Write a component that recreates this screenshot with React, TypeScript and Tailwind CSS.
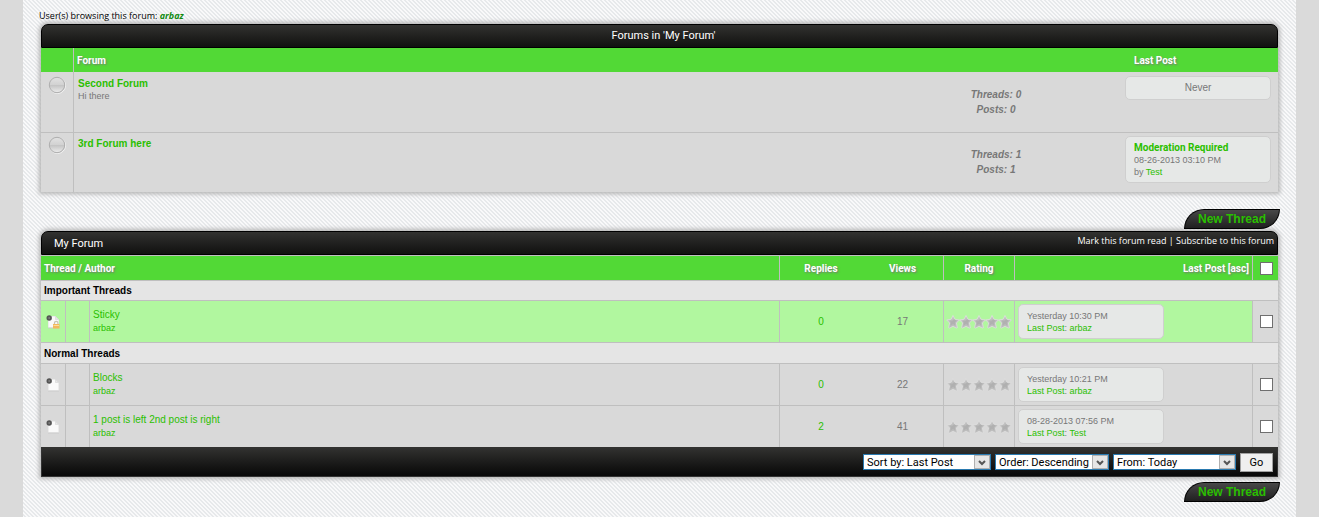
import type { ReactNode } from 'react'

const forums = [
  { name: 'Second Forum', description: 'Hi there', threads: 0, posts: 0, last: null },
  {
    name: '3rd Forum here',
    description: '',
    threads: 1,
    posts: 1,
    last: { title: 'Moderation Required', date: '08-26-2013 03:10 PM', user: 'Test' },
  },
]

const important = [
  { title: 'Sticky', author: 'arbaz', replies: 0, views: 17, date: 'Yesterday 10:30 PM', last: 'arbaz', locked: true },
]

const normal = [
  { title: 'Blocks', author: 'arbaz', replies: 0, views: 22, date: 'Yesterday 10:21 PM', last: 'arbaz', locked: false },
  { title: '1 post is left 2nd post is right', author: 'arbaz', replies: 2, views: 41, date: '08-28-2013 07:56 PM', last: 'Test', locked: false },
]

type Thread = (typeof normal)[number]

function Link({ children, className = '' }: { children: ReactNode; className?: string }) {
  return (
    <a href="#" className={`text-[#2abf00] ${className}`}>
      {children}
    </a>
  )
}

function NewThread() {
  return (
    <a
      href="#"
      className="flex h-5 w-24 items-center justify-center rounded-tl-[20px] rounded-br-[20px] border border-black bg-linear-to-b from-[#484848] to-[#202020] text-xs font-bold text-[#2abf00]"
    >
      New Thread
    </a>
  )
}

function Orb() {
  return (
    <svg width="18" height="18" viewBox="0 0 18 18" className="mx-auto">
      <defs>
        <linearGradient id="orb" x1="0" y1="0" x2="0" y2="1">
          <stop offset="0" stopColor="#e2e2e2" />
          <stop offset="0.48" stopColor="#d2d2d2" />
          <stop offset="0.52" stopColor="#c4c4c4" />
          <stop offset="1" stopColor="#ededed" />
        </linearGradient>
      </defs>
      <circle cx="9.5" cy="9.5" r="8" fill="none" stroke="#f2f2f2" />
      <circle cx="9" cy="9" r="7.700" fill="url(#orb)" stroke="#adadad" />
    </svg>
  )
}

function PageIcon({ locked }: { locked: boolean }) {
  return (
    <svg width="14" height="16" viewBox="0 0 14 16" className="mx-auto">
      <path d="M2.500 2.500h7l3 3v8h-10z" fill="#fafafa" stroke="#ececec" />
      <path d="M9.500 2.500v3h3z" fill="#e8e8e8" stroke="#cfcfcf" strokeWidth="0.500" />
      <path d="M2 14h11" stroke="#c8c8c8" strokeWidth="0.800" />
      <circle cx="3.200" cy="4" r="2.700" fill="#555" />
      <circle cx="3.200" cy="4" r="1" fill="#7d7d7d" />
      {locked && (
        <>
          <path d="M8.500 10v-1a1.700 1.700 0 0 1 3.400 0v1" fill="none" stroke="#c9c2b2" strokeWidth="1.200" />
          <rect x="7" y="10" width="6.500" height="4.500" fill="#f3b95c" />
          <path d="M7.500 11.500h5.500" stroke="#fbdc9f" />
        </>
      )}
    </svg>
  )
}

function Stars() {
  return (
    <svg width="66" height="15" viewBox="0 0 66 15" className="mx-auto" role="img" aria-label="Not rated">
      <defs>
        <linearGradient id="star" x1="0" y1="0" x2="1" y2="1">
          <stop offset="0" stopColor="#d6d6d6" />
          <stop offset="0.500" stopColor="#bababa" />
          <stop offset="1" stopColor="#c8c8c8" />
        </linearGradient>
      </defs>
      {[0, 13, 26, 39, 52].map((x) => (
        <g key={x} transform={`translate(${x} 1)`}>
          <path
            d="M7 .5l2 3.800 4.400.6-3 3.100 1 4.700-1.200.3-3.200-1.700-3.200 1.700-1.200-.3 1-4.700-3-3.100 4.400-.6z"
            fill="url(#star)"
            stroke="#dedede"
            strokeWidth="0.800"
          />
          <path d="M3.500 5.500h3.500l1-1 2.500 1-1.500 2 .5 3.500-2.500-2-2.500 1.500 .5-2.500z" fill="#a8a8a8" fillOpacity="0.550" />
        </g>
      ))}
    </svg>
  )
}

function PostBox({ children, className = '' }: { children: ReactNode; className?: string }) {
  return (
    <div className={`w-[146px] rounded-[5px] border border-[#cfcfcf] bg-[#e6e8e7] px-2 leading-3 ${className}`}>{children}</div>
  )
}

function Check({ label }: { label: string }) {
  return (
    <input
      type="checkbox"
      aria-label={label}
      className="ml-[7px] block size-[13px] appearance-none border border-[#6f6f6f] bg-white"
    />
  )
}

function ThreadRow({ thread, sticky = false }: { thread: Thread; sticky?: boolean }) {
  const bg = sticky ? 'bg-[#b1f79f]' : 'bg-[#d9d9d9]'
  const cell = `border-t border-r border-[#bfbfbf] ${bg}`
  return (
    <tr className="h-[42px]">
      <td className={cell}>
        <PageIcon locked={thread.locked} />
      </td>
      <td className={cell}></td>
      <td className={`pl-[3px] leading-[13px] ${cell}`}>
        <Link>{thread.title}</Link>
        <br />
        <Link className="text-[9px]">{thread.author}</Link>
      </td>
      <td className={`border-t border-[#bfbfbf] text-center ${bg}`}>
        <Link>{thread.replies}</Link>
      </td>
      <td className={`text-center ${cell}`}>{thread.views}</td>
      <td className={cell}>
        <Stars />
      </td>
      <td className={`pl-[3px] text-[9px] ${cell}`}>
        <PostBox className="pt-[5px] pb-1">
          {thread.date}
          <br />
          <Link>Last Post</Link>: <Link>{thread.last}</Link>
        </PostBox>
      </td>
      <td className="border-t border-[#bfbfbf] bg-[#d9d9d9]">
        <Check label={`Select ${thread.title}`} />
      </td>
    </tr>
  )
}

function Separator({ children, className }: { children: ReactNode; className: string }) {
  return (
    <tr className={className}>
      <td colSpan={8} className="border-t border-[#bfbfbf] bg-[#e5e5e5] pl-[3px] font-bold text-black">
        {children}
      </td>
    </tr>
  )
}

function Select({ label, className }: { label: string; className: string }) {
  return (
    <div className={`relative h-4 ${className}`}>
      <select
        aria-label={label}
        className="block h-4 w-full appearance-none border border-[#2a7ab0] bg-white pt-px pl-[3px] font-[Roboto,sans-serif] text-[11px] leading-[14px] text-black"
      >
        <option>{label}</option>
      </select>
      <span className="pointer-events-none absolute inset-y-px right-px flex w-4 items-center justify-center border border-[#b0b0b0] bg-[#e6e6e6]">
        <svg width="8" height="8" viewBox="0 0 8 8" fill="none" stroke="#555" strokeWidth="2">
          <path d="M1 3l3 3 3-3" />
        </svg>
      </span>
    </div>
  )
}

const panel = 'mx-[2px] rounded-t-[7px] bg-[#bfbfbf] shadow-[0_0_4px_2px_#b4b4b4]'
const bar = 'rounded-t-[7px] border border-black bg-linear-to-b from-[#323230] to-[#111110] text-white'
const head = 'bg-[#52d936] font-[Roboto,sans-serif] font-bold text-white [text-shadow:1px_1px_2px_#777]'

export default function App() {
  return (
    <div className="min-h-screen bg-[#dadada] px-[23px] font-['Liberation_Sans',Arial,sans-serif] text-[10px] text-[#777]">
      <main className="min-h-screen bg-[linear-gradient(45deg,#e7e9eb_25%,#f9f9fa_25%,#f9f9fa_50%,#e7e9eb_50%,#e7e9eb_75%,#f9f9fa_75%)] bg-size-[4px_4px] px-4 pt-[9px]">
        <p className="h-[15px] font-['Open_Sans',sans-serif] text-[9px] leading-[14px] text-black">
          User(s) browsing this forum:{' '}
          <a href="#" className="font-bold text-[#118a11] italic">
            arbaz
          </a>
        </p>

        <section className={panel}>
          <h2 className={`flex h-6 items-center justify-center pl-2 font-[Roboto,sans-serif] text-[11px] ${bar}`}>Forums in 'My Forum'</h2>
          <table className="w-full table-fixed border-separate border-spacing-0">
            <colgroup>
              <col className="w-[33px]" />
              <col />
              <col className="w-[248px]" />
              <col className="w-[158px]" />
            </colgroup>
            <thead>
              <tr className={`h-6 text-left ${head}`}>
                <th className="border-r border-[#bfbfbf]"></th>
                <th className="pl-[3px]">Forum</th>
                <th></th>
                <th className="pl-[14px]">Last Post</th>
              </tr>
            </thead>
            <tbody>
              {forums.map((forum, i) => (
                <tr key={forum.name} className={i === 0 ? 'h-[60px] bg-[#d9d9d9] *:pt-1' : 'h-[60px] bg-[#d9d9d9] *:border-t *:pt-[3px]'}>
                  <td className="border-r border-[#bfbfbf] align-top">
                    <Orb />
                  </td>
                  <td className="border-[#bfbfbf] pl-1 align-top leading-3">
                    <Link className="mt-[2px] block font-bold">{forum.name}</Link>
                    <div className="text-[9px]">{forum.description}</div>
                  </td>
                  <td className="border-[#bfbfbf] pb-1 text-center leading-[15px] font-bold italic">
                    Threads: {forum.threads}
                    <br />
                    Posts: {forum.posts}
                  </td>
                  <td className="border-[#bfbfbf] pl-[5px] align-top">
                    {forum.last ? (
                      <PostBox className="pt-[5px] pb-1 text-[9px]">
                        <Link className="block font-[Roboto,sans-serif] text-[10px] font-bold">{forum.last.title}</Link>
                        {forum.last.date}
                        <br />
                        by <Link>{forum.last.user}</Link>
                      </PostBox>
                    ) : (
                      <PostBox className="py-[5px] text-center">Never</PostBox>
                    )}
                  </td>
                </tr>
              ))}
            </tbody>
          </table>
        </section>

        <div className="mt-[17px] flex justify-end">
          <NewThread />
        </div>

        <section className={`mt-[2px] ${panel}`}>
          <div className={`flex h-6 justify-between pr-[3px] pl-3 ${bar}`}>
            <h2 className="font-[Roboto,sans-serif] text-[11px] leading-[23px]">My Forum</h2>
            <nav className="font-['Open_Sans',sans-serif] text-[9px] leading-[18px]">
              <a href="#">Mark this forum read</a> | <a href="#">Subscribe to this forum</a>
            </nav>
          </div>
          <table className="w-full table-fixed border-separate border-spacing-0">
            <colgroup>
              <col className="w-[25px]" />
              <col className="w-6" />
              <col />
              <col className="w-[82px]" />
              <col className="w-[82px]" />
              <col className="w-[71px]" />
              <col className="w-[238px]" />
              <col className="w-[25px]" />
            </colgroup>
            <thead>
              <tr className={`h-[25px] *:border-t *:border-[#bfbfbf] ${head}`}>
                <th colSpan={3} className="border-r pl-[3px] text-left">Thread / Author</th>
                <th>Replies</th>
                <th className="border-r">Views</th>
                <th className="border-r">Rating</th>
                <th className="border-r pr-[3px] text-right">Last Post [asc]</th>
                <th>
                  <Check label="Select all threads" />
                </th>
              </tr>
            </thead>
            <tbody>
              <Separator className="h-5">Important Threads</Separator>
              {important.map((thread) => (
                <ThreadRow key={thread.title} thread={thread} sticky />
              ))}
              <Separator className="h-[21px]">Normal Threads</Separator>
              {normal.map((thread) => (
                <ThreadRow key={thread.title} thread={thread} />
              ))}
            </tbody>
          </table>
          <form className="flex h-[30px] items-center justify-end gap-1 border border-[#333] border-t-[#323230] bg-linear-to-b from-[#323230] to-[#080808] pr-1">
            <Select label="Sort by: Last Post" className="w-32" />
            <Select label="Order: Descending" className="w-[114px]" />
            <Select label="From: Today" className="w-[123px]" />
            <button
              type="button"
              className="h-[19px] w-[33px] border border-[#a0a0a0] bg-[#efefef] font-[Roboto,sans-serif] text-[11px] leading-[17px] text-black"
            >
              Go
            </button>
          </form>
        </section>

        <div className="mt-[5px] flex justify-end">
          <NewThread />
        </div>
      </main>
    </div>
  )
}
